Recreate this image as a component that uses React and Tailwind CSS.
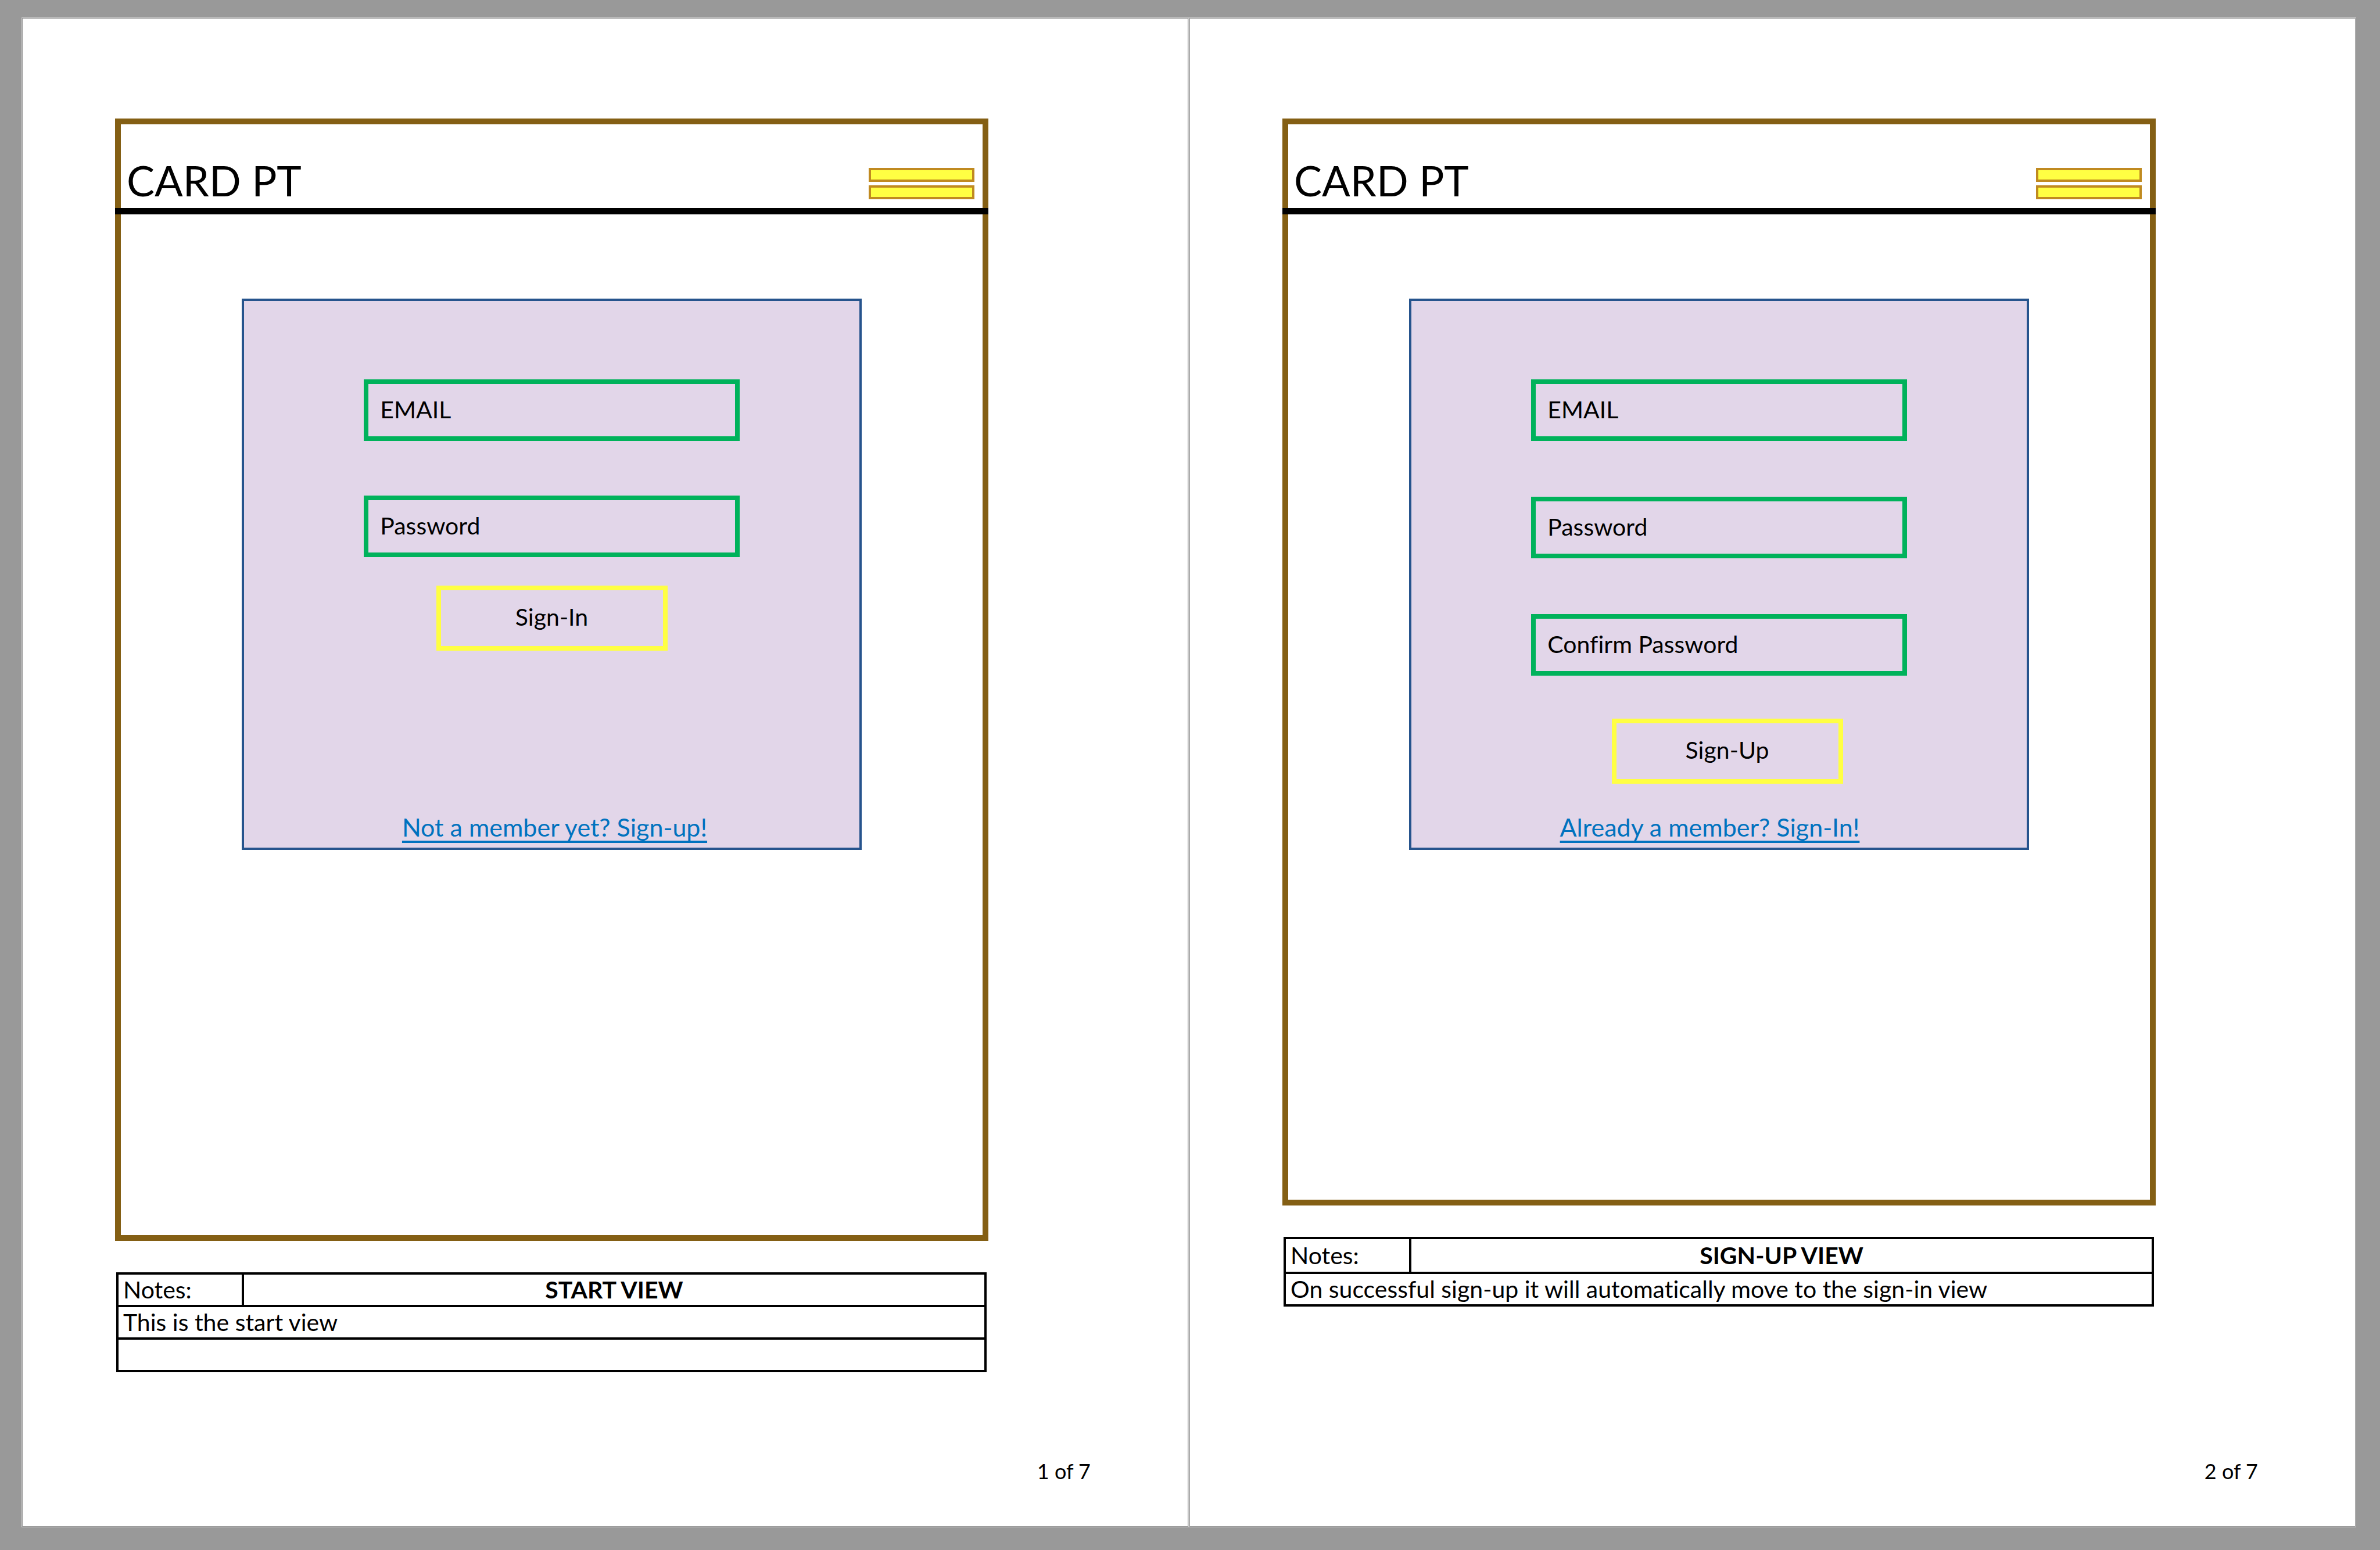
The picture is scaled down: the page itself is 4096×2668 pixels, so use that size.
import React from "react";

function Field({ id, label, type }) {
  return (
    <input
      id={id}
      type={type}
      aria-label={label}
      placeholder={label}
      className="block h-[106px] w-full border-8 border-[#00b25b] bg-transparent px-[20px] pb-[4px] text-[41px] leading-[50px] text-black outline-none placeholder:text-black placeholder:opacity-100"
    />
  );
}

function MenuButton() {
  return (
    <button type="button" aria-label="Menu" className="flex w-[182px] flex-col gap-[6px]">
      <span className="h-[24px] w-full border-4 border-[#c08a20] bg-[#ffff43]" />
      <span className="h-[24px] w-full border-4 border-[#c08a20] bg-[#ffff43]" />
    </button>
  );
}

function Device({ children, frameClass }) {
  return (
    <section className={"flex flex-col border-[10px] border-[#845f14] " + frameClass}>
      <header className="-mx-[10px] flex h-[155px] items-end justify-between border-b-[11px] border-black pr-[24px] pb-[15px] pl-[20px]">
        <h1 className="text-[72px] leading-[66px]">CARD PT</h1>
        <MenuButton />
      </header>
      {children}
    </section>
  );
}

function Panel({ fields, fieldsClass, action, actionClass, link, linkClass }) {
  return (
    <form className="mx-auto mt-[145px] flex min-h-[949px] w-[72%] flex-col border-4 border-[#26548d] bg-[#e2d6e9] pt-[135px]">
      <div className={"mx-auto flex w-[61%] flex-col " + fieldsClass}>
        {fields.map((field) => (
          <Field key={field.id} {...field} />
        ))}
      </div>
      <div className={"flex justify-center " + actionClass}>
        <button
          type="button"
          className="h-[112px] w-[398px] border-8 border-[#ffff43] pb-[4px] text-[41px] leading-[50px]"
        >
          {action}
        </button>
      </div>
      <div className={"mt-auto flex justify-center pb-[10px] " + linkClass}>
        <a
          href="#"
          className="text-[43px] leading-[50px] text-[#0072bf] underline decoration-[4px] underline-offset-[7px] [text-decoration-skip-ink:none]"
        >
          {link}
        </a>
      </div>
    </form>
  );
}

function Notes({ title, headClass, rows }) {
  return (
    <table className="mt-[54px] mr-[3px] ml-[2px] table-fixed border-collapse border-4 border-black text-[41px] leading-[52px]">
      <colgroup>
        <col className="w-[216px]" />
        <col />
      </colgroup>
      <thead>
        <tr className={headClass}>
          <th scope="row" className="border-4 border-black px-[8px] py-0 text-left font-normal">
            Notes:
          </th>
          <th scope="col" className="border-4 border-black p-0 text-center font-bold">
            {title}
          </th>
        </tr>
      </thead>
      <tbody>
        {rows.map((row, index) => (
          <tr key={index} className="h-[56px]">
            <td colSpan={2} className="border-4 border-black px-[8px] py-0">
              {row}
            </td>
          </tr>
        ))}
      </tbody>
    </table>
  );
}

function Page({ number, children }) {
  return (
    <article className="flex flex-col border border-[#cccccc] bg-white pt-[173px] pr-[344px] pl-[160px] shadow-[inset_0_0_0_1px_#999999]">
      {children}
      <footer className="mt-auto -mr-[176px] pb-[76px] text-right text-[36px] leading-[40px]">
        {number} of 7
      </footer>
    </article>
  );
}

export default function App() {
  return (
    <main className="grid min-h-screen grid-cols-2 bg-[#999999] pt-[30px] pr-[41px] pb-[39px] pl-[37px] font-['Lato',sans-serif] text-black [font-variant-ligatures:none]">
      <Page number={1}>
        <Device frameClass="min-h-[1932px]">
          <Panel
            fields={[
              { id: "signin-email", label: "EMAIL", type: "email" },
              { id: "signin-password", label: "Password", type: "password" },
            ]}
            fieldsClass="gap-[94px]"
            action="Sign-In"
            actionClass="mt-[49px]"
            link="Not a member yet? Sign-up!"
            linkClass="pl-[10px]"
          />
        </Device>
        <Notes title="START VIEW" headClass="h-[56px]" rows={["This is the start view", ""]} />
      </Page>
      <Page number={2}>
        <Device frameClass="min-h-[1871px]">
          <Panel
            fields={[
              { id: "signup-email", label: "EMAIL", type: "email" },
              { id: "signup-password", label: "Password", type: "password" },
              { id: "signup-confirm", label: "Confirm Password", type: "password" },
            ]}
            fieldsClass="gap-[96px]"
            action="Sign-Up"
            actionClass="mt-[74px] pl-[28px]"
            link="Already a member? Sign-In!"
            linkClass="pr-[32px]"
          />
        </Device>
        <Notes
          title="SIGN-UP VIEW"
          headClass="h-[60px]"
          rows={["On successful sign-up it will automatically move to the sign-in view"]}
        />
      </Page>
    </main>
  );
}
